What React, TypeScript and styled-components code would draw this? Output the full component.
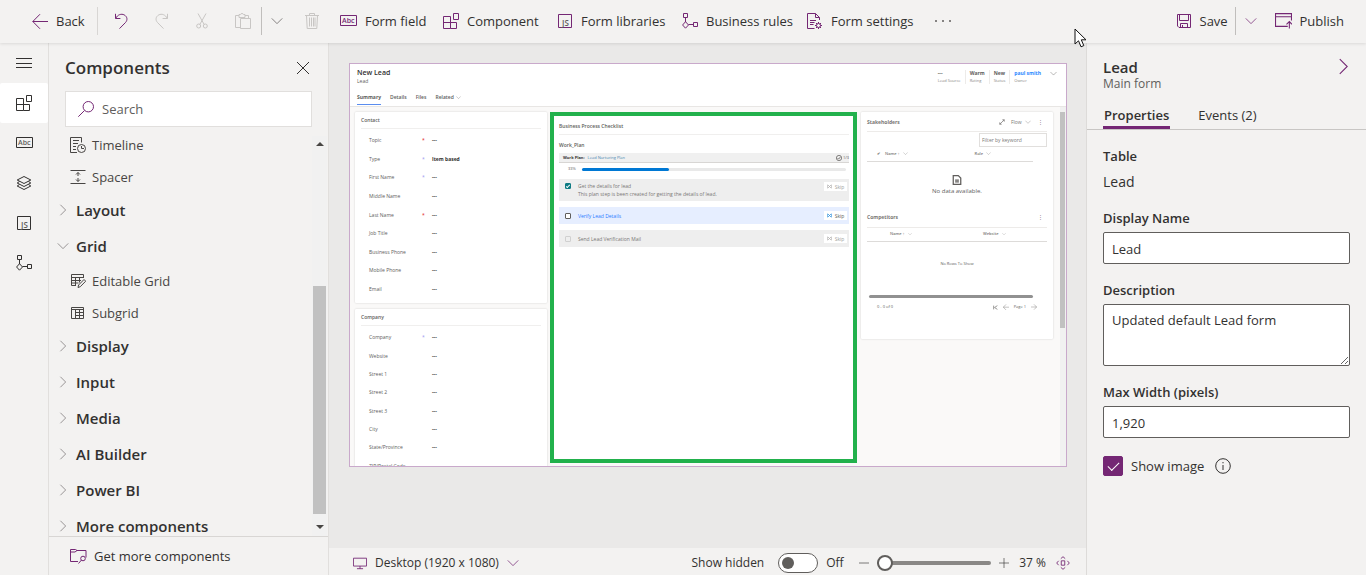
import React from "react";
import styled, { createGlobalStyle, css } from "styled-components";

const purple = "#742774";
const ink = "#323130";

const Global = createGlobalStyle`
  *, *::before, *::after { box-sizing: border-box; }
  body {
    margin: 0;
    font-family: "Segoe UI", "Open Sans", "Noto Sans", sans-serif;
    font-size: 13px;
    line-height: 20px;
    color: ${ink};
    background: #f3f2f1;
  }
  button, input, textarea { font: inherit; color: inherit; }
  button { border: 0; background: none; padding: 0; cursor: pointer; }
  a { color: inherit; text-decoration: none; }
  h1, h2, h3, p, ul, dl, dd, dt { margin: 0; padding: 0; font-weight: inherit; font-size: inherit; }
  ul { list-style: none; }
`;

/* ---------- icons ---------- */

const Svg = styled.svg<{ $c?: string }>`
  display: block;
  flex: none;
  fill: none;
  stroke: ${(p) => p.$c || "currentColor"};
`;

type IconProps = { c?: string; size?: number };
const Icon = ({ c, size = 16, children }: IconProps & { children: React.ReactNode }) => (
  <Svg $c={c} width={size} height={size} viewBox="0 0 16 16" aria-hidden="true">
    {children}
  </Svg>
);

const ArrowLeft = (p: IconProps) => <Icon {...p}><path d="M16 8.5H.8M8 1.2.8 8.5 8 15.8" /></Icon>;
const Undo = (p: IconProps) => <Icon {...p}><path d="M2.5.8V5.5H7.4M2.8 5.3C4.6 1.6 8.4.4 11.2 1.9c3 1.6 3.7 5 1.3 7.6L6.5 15.6" /></Icon>;
const Redo = (p: IconProps) => <Icon {...p}><path d="M13.5.8V5.5H8.6M13.2 5.3C11.4 1.6 7.6.4 4.8 1.9c-3 1.6-3.7 5-1.3 7.6L9.5 15.6" /></Icon>;
const Cut = (p: IconProps) => <Icon {...p}><path d="M4 .5 10.2 11.5M12 .5 5.8 11.5" /><circle cx="4.7" cy="13" r="2" /><circle cx="11.3" cy="13" r="2" /></Icon>;
const Paste = (p: IconProps) => <Icon {...p}><path d="M5.5 14.5H.5V2.5H4M10 2.5H13.5V5M4 4.5V1.5H5.5C5.5.2 8.5.2 8.5 1.5H10V4.5ZM5.5 5.5H15.5V15.5H5.5Z" /></Icon>;
const Trash = (p: IconProps) => <Icon {...p}><path d="M1 2.5H15M5.5 2.5V.5H10.5V2.5M2.5 2.5 3.2 15.5H12.8L13.5 2.5M5.5 4.5V13.5M7.5 4.5V13.5M9.5 4.5V13.5M11 4.5V13.5" /></Icon>;
const Component = (p: IconProps) => <Icon {...p}><path d="M.5 3.5H7.5V15.5H.5ZM.5 9.5H13.5V15.5H7.5M10.5.5H15.5V6.5H10.5Z" /></Icon>;
const Rules = (p: IconProps) => <Icon {...p}><path d="M1.5.5H5.5V4.5H1.5ZM3.5 4.5V9M3.5 8.7 6.5 12 3.5 15.2.6 12ZM6.5 11.5H11.5M11.5 9.5H15.5V13.5H11.5Z" /></Icon>;
const FormSettings = (p: IconProps) => <Icon {...p}><path d="M7.5 15.5H.5V.5H8.5L12.5 4.5V7M8.5.5V4.5H12.5M3 7.5H9M3 9.5H7.5M3 11.5H6.5" /><circle cx="11.5" cy="12.5" r="2" /><path d="M11.5 9V10.5M11.5 14.5V16M8 12.5H9.5M13.5 12.5H15M9 10 10.1 11.1M12.9 13.9 14 15M14 10 12.9 11.1M10.1 13.9 9 15" /></Icon>;
const Save = (p: IconProps) => <Icon {...p}><path d="M1.5 1.5H14.5V14.5H3L1.5 13ZM3.5 1.5V7.5H12.5V1.5M4.5 14.5V10.5H11.5V14.5M6.5 12V14.5" /></Icon>;
const Publish = (p: IconProps) => <Icon {...p}><path d="M12 13.5H.5V1.5H15.5V8M.5 4.5H15.5M13.5 15.5V9M10.8 11.6 13.5 9 16 11.6" /></Icon>;
const Menu = (p: IconProps) => <Icon {...p}><path d="M0 3.5H16M0 8.5H16M0 12.5H16" /></Icon>;
const Layers = (p: IconProps) => <Icon {...p}><path d="M8 1.5 14.8 5 8 8.5 1.2 5ZM3.5 6.5 1.2 8 8 11.5 14.8 8 12.5 6.5M3.5 9.5 1.2 11 8 14.5 14.8 11 12.5 9.5" /></Icon>;
const Close = (p: IconProps) => <Icon {...p}><path d="M2 2 14 14M14 2 2 14" /></Icon>;
const Search = (p: IconProps) => <Icon {...p}><circle cx="10.3" cy="5.7" r="5.2" /><path d="M6.5 9.5.3 15.7" /></Icon>;
const Timeline = (p: IconProps) => <Icon {...p}><path d="M7 15.5H.5V.5H11.5V5.5M3 3.5H9M3 6.5H8M3 9.5H6M3 12.5H6" /><circle cx="11.5" cy="11.5" r="4" /><path d="M11.5 9V11.5H14" /></Icon>;
const Spacer = (p: IconProps) => <Icon {...p}><path d="M.5 1.5H15.5M.5 14.5H15.5M8 3.5V7M8 9V12.5M6 5.5 8 3.5 10 5.5M6 10.5 8 12.5 10 10.5" /></Icon>;
const EditGrid = (p: IconProps) => <Icon {...p}><path d="M6 12.5H1.5V1.5H13.5V5M1.5 4.5H13.5M1.5 7.5H11M1.5 10H8.5M5.5 4.5V12.5M9.5 4.5V9.5M8 14.5 8.6 12 14 6.5 15.7 8.2 10.3 13.7Z" /></Icon>;
const Grid = (p: IconProps) => <Icon {...p}><path d="M1.5 2.5H13.5V13.5H1.5ZM1.5 4.5H13.5M5.5 4.5V13.5M9.5 4.5V13.5M5.5 7.5H13.5M5.5 10.5H13.5" /></Icon>;
const Chevron = ({ c, size = 12, dir = "down" }: IconProps & { dir?: "down" | "right" }) => (
  <Icon c={c} size={size}>{dir === "down" ? <path d="M1 4.5 8 11.5 15 4.5" /> : <path d="M4.5 1 11.5 8 4.5 15" />}</Icon>
);
const GetMore = () => (
  <Svg $c={purple} width="18" height="16" viewBox="0 0 18 16" aria-hidden="true">
    <path d="M9 13.5H1.5V1.5H6.5L8 2.5H17V9.5M1.5 4H6L8 2.5M9.5 15.5 12.5 12" /><circle cx="14" cy="10.5" r="2.3" />
  </Svg>
);
const Monitor = () => (
  <Icon c={purple} size={14}><path d="M.5 2.5H15.5V11.5H.5ZM8 11.5V14.5M4.5 14.5H11.5" /></Icon>
);
const Fit = () => (
  <Icon c={purple} size={14}><path d="M6 5.5H10V10.5H6ZM5.5 3 8 .8 10.5 3M5.5 13 8 15.2 10.5 13M3 5.5.8 8 3 10.5M13 5.5 15.2 8 13 10.5" /></Icon>
);
const Info = () => <Icon><circle cx="8" cy="8" r="7.3" /><path d="M8 7V12M8 4V5.3" /></Icon>;
const Pointer = styled.svg`
  position: absolute;
  right: 279px;
  top: 28px;
  z-index: 5;
`;

const IconText = styled.text`
  stroke: none;
  font-family: "Open Sans", sans-serif;
`;
const Abc = ({ c, t }: { c: string; t: string }) => (
  <Svg $c={c} width="17" height="16" viewBox="0 0 17 16" aria-hidden="true">
    <path d="M.5 2.5H16.5V12.5H.5Z" />
    <IconText x="2" y="10" fontSize="7" fontWeight="600" fill={t}>Abc</IconText>
  </Svg>
);
const Js = ({ c, t }: { c: string; t: string }) => (
  <Svg $c={c} width="16" height="16" viewBox="0 0 16 16" aria-hidden="true">
    <path d="M1.5 1.5H14.5V14.5H1.5Z" />
    <IconText x="5" y="13" fontSize="8" fontWeight="600" fill={t}>JS</IconText>
  </Svg>
);

/* ---------- shell ---------- */

const Shell = styled.div`
  display: grid;
  grid-template: 43px minmax(0, 1fr) / 49px 280px minmax(0, 1fr) 280px;
  height: 100vh;
`;

const TopBar = styled.header`
  grid-column: 1 / -1;
  position: relative;
  z-index: 2;
  display: flex;
  align-items: center;
  padding: 0 14px 2px 24px;
  box-shadow: 0 1px 3px rgba(0, 0, 0, 0.1);
  background: #f3f2f1;
`;
const Command = styled.button<{ $w?: number }>`
  display: flex;
  align-items: center;
  gap: 8px;
  height: 40px;
  padding: 0 8px;
  white-space: nowrap;
  ${(p) => p.$w && css`width: ${p.$w}px;`}
`;
const IconButton = styled.button<{ $w?: number }>`
  display: grid;
  place-items: center;
  width: ${(p) => p.$w || 40}px;
  height: 40px;
`;
const Divider = styled.span<{ $strong?: boolean }>`
  width: 1px;
  height: 28px;
  background: ${(p) => (p.$strong ? "#c0bebc" : "#d8d6d4")};
`;
const Push = styled.span`flex: 1;`;
const Dots = styled.span`
  display: flex;
  gap: 5px;
  i { width: 2px; height: 2px; border-radius: 1px; background: #605e5c; }
`;

const Rail = styled.nav`
  border-right: 1px solid #e1dfdd;
`;
const RailButton = styled.button<{ $on?: boolean }>`
  display: grid;
  place-items: center;
  width: 48px;
  height: 40px;
  border-radius: 2px;
  background: ${(p) => (p.$on ? "#fff" : "transparent")};
`;

/* ---------- component panel ---------- */

const Panel = styled.aside`
  display: flex;
  flex-direction: column;
  min-height: 0;
  border-right: 1px solid #e1dfdd;
`;
const PanelHead = styled.div`
  display: flex;
  align-items: center;
  justify-content: space-between;
  height: 48px;
  padding: 1px 17px 0 16px;
`;
const PanelTitle = styled.h2`
  && { font-size: 17px; font-weight: 600; }
`;
const SearchBox = styled.label`
  display: flex;
  align-items: center;
  gap: 8px;
  height: 36px;
  margin: 0 16px 2px;
  padding: 0 12px;
  border: 1px solid #e1dfdd;
  background: #fff;
  input { width: 100%; border: 0; padding: 0; outline: 0; background: none; }
  input::placeholder { color: #605e5c; opacity: 1; }
`;
const ListArea = styled.div`
  display: flex;
  flex: 1;
  min-height: 0;
  padding-right: 1px;
  border-bottom: 1px solid #d8d6d4;
`;
const List = styled.ul`
  flex: 1;
  overflow: hidden;
`;
const Leaf = styled.button`
  display: flex;
  align-items: center;
  gap: 6px;
  width: 100%;
  height: 32px;
  padding-left: 21px;
  color: #484644;
`;
const Group = styled.button`
  display: flex;
  align-items: center;
  gap: 7px;
  width: 100%;
  height: 36px;
  padding: 0 0 2px 8px;
  font-size: 15px;
  font-weight: 600;
  svg { stroke: #797775; }
`;
const Track = styled.div`
  display: flex;
  flex-direction: column;
  align-items: center;
  justify-content: space-between;
  width: 15px;
  margin-top: 7px;
  padding: 6px 0 7px;
  background: #f1f1f1;
`;
const Thumb = styled.span`
  width: 13px;
  flex: 0 0 59%;
  margin-top: auto;
  margin-bottom: 11px;
  background: #c1c1c1;
`;
const Caret = styled.span<{ $up?: boolean }>`
  border: 4px solid transparent;
  border-${(p) => (p.$up ? "bottom" : "top")}-color: #484644;
  border-${(p) => (p.$up ? "top" : "bottom")}-width: 0;
`;
const GetMoreLink = styled.a`
  display: flex;
  align-items: center;
  gap: 7px;
  height: 38px;
  padding-left: 20px;
`;

/* ---------- canvas ---------- */

const Canvas = styled.main`
  display: flex;
  flex-direction: column;
  background: #eae9e8;
  min-width: 0;
`;
const Stage = styled.div`
  flex: 1;
  min-height: 0;
  padding: 20px 19px 0 20px;
`;
const Form = styled.div`
  display: flex;
  flex-direction: column;
  aspect-ratio: 718 / 404;
  overflow: hidden;
  border: 1px solid #c9a9cb;
  background: #faf9f8;
  font-size: 5px;
  line-height: 8px;
  color: #605e5c;
`;
const FormHead = styled.div`
  display: flex;
  justify-content: space-between;
  height: 43px;
  padding: 5px 9px 0 7px;
  border-bottom: 1px solid #e8e6e4;
  background: #fff;
`;
const FormTitle = styled.h1`
  && { font-size: 7px; font-weight: 600; }
  color: ${ink};
`;
const FormTabs = styled.div`
  display: flex;
  gap: 9px;
  margin-top: 6px;
`;
const FormTab = styled.button<{ $on?: boolean }>`
  display: flex;
  align-items: center;
  gap: 2px;
  height: 14px;
  padding-bottom: 1px;
  border-bottom: 1px solid ${(p) => (p.$on ? "#5b8def" : "transparent")};
  font-weight: ${(p) => (p.$on ? 700 : 600)};
`;
const Facts = styled.dl`
  display: flex;
  align-items: start;
  padding-top: 1px;
`;
const Fact = styled.div`
  display: flex;
  flex-direction: column-reverse;
  padding: 0 4px;
  border-right: 1px solid #edebe9;
  line-height: 7px;
  font-size: 4px;
  dt { color: #8a8886; }
  dd { font-size: 5px; font-weight: 700; }
  a { color: #2b88ff; }
  &:nth-last-of-type(1) { border: 0; padding-right: 9px; }
`;
const Body = styled.div`
  display: flex;
  flex: 1;
  min-height: 0;
`;
const Columns = styled.div`
  display: grid;
  grid-template-columns: 192fr 307fr 193fr;
  gap: 3px;
  flex: 1;
  padding: 5px 7px 0 5px;
  min-height: 0;
`;
const Column = styled.div`
  display: flex;
  flex-direction: column;
  gap: 6px;
  min-height: 0;
`;
const Card = styled.section`
  flex: none;
  padding: 0 6px 3px;
  border-radius: 1px;
  background: #fff;
  box-shadow: 0 0 2px rgba(0, 0, 0, 0.18);
`;
const RightCard = styled(Card)`
  height: 227px;
  margin-left: 1px;
`;
const CardTitle = styled.h3`
  height: 17px;
  padding-top: 4px;
  border-bottom: 1px solid #f0efee;
  && { font-weight: 600; }
`;
const Fields = styled.dl<{ $h: number }>`
  display: flex;
  flex-direction: column;
  height: ${(p) => p.$h}px;
  padding: 2px 8px;
`;
const Field = styled.div`
  display: grid;
  grid-template-columns: 53px 10px 1fr;
  align-items: center;
  flex: 1;
  dd { color: ${ink}; font-weight: 700; }
`;
const Mark = styled.span<{ $red?: boolean }>`
  color: ${(p) => (p.$red ? "#e02020" : "#9a9af0")};
`;

const Highlight = styled.section`
  height: 351px;
  padding: 2px 4px 0 5px;
  border: 4px solid #22b14c;
  background: #fff;
`;
const PlanLabel = styled.p`
  margin: 6px 0 4px;
  font-weight: 600;
`;
const PlanHead = styled.div`
  display: flex;
  align-items: center;
  gap: 3px;
  height: 10px;
  padding: 0 0 0 4px;
  border-bottom: 1px solid #d8d6d4;
  background: #f0f0f0;
  font-size: 4px;
  b { color: ${ink}; }
  a { color: #4a86b0; }
  span:last-child { display: flex; align-items: center; gap: 1px; margin-left: auto; }
`;
const Progress = styled.div`
  display: flex;
  align-items: center;
  gap: 6px;
  height: 12px;
  margin-bottom: 4px;
  padding: 0 3px 0 9px;
  font-size: 4px;
`;
const Bar = styled.div`
  flex: 1;
  height: 3px;
  border-radius: 2px;
  background: #e9e9e9;
  div { width: 33%; height: 3px; border-radius: 2px; background: #0078d4; }
`;
const Step = styled.div<{ $active?: boolean; $tall?: boolean }>`
  display: flex;
  align-items: ${(p) => (p.$tall ? "start" : "center")};
  height: ${(p) => (p.$tall ? 22 : 17)}px;
  margin-bottom: 6px;
  padding: ${(p) => (p.$tall ? "3px 2px 0 6px" : "0 2px 0 6px")};
  background: ${(p) => (p.$active ? "#e6eeff" : "#eeeeee")};
  label { flex: 1; padding-left: 7px; color: ${(p) => (p.$active ? "#2b7cff" : "#797775")}; }
`;
const Tick = styled.input<{ $muted?: boolean }>`
  appearance: none;
  display: grid;
  place-items: center;
  width: 6px;
  height: 6px;
  margin: 1px 0 0;
  border: 1px solid ${(p) => (p.$muted ? "#d0d0d0" : "#605e5c")};
  border-radius: 1px;
  background: ${(p) => (p.$muted ? "#eee" : "#fff")};
  &:checked { background: #0f7b83; border-color: #0f7b83; }
  &:checked::after {
    content: "";
    width: 4px;
    height: 2px;
    border: solid #fff;
    border-width: 0 0 1px 1px;
    transform: rotate(-45deg);
  }
`;
const Skip = styled.button<{ $active?: boolean }>`
  display: flex;
  align-items: center;
  justify-content: center;
  gap: 3px;
  width: 23px;
  height: 9px;
  background: #fff;
  color: ${(p) => (p.$active ? "#605e5c" : "#a19f9d")};
  svg { stroke: ${(p) => (p.$active ? "#0078d4" : "#a19f9d")}; }
`;

const RightHead = styled.div`
  display: flex;
  align-items: center;
  gap: 4px;
  height: 20px;
  padding-right: 4px;
  border-bottom: 1px solid #edebe9;
  color: #797775;
  h3 { flex: 1; font-weight: 700; }
  button { display: flex; align-items: center; gap: 3px; padding-left: 2px; }
`;
const Filter = styled.input`
  display: block;
  width: 68px;
  height: 14px;
  margin: 1px 0 0 auto;
  padding: 0 2px;
  border: 1px solid #e1dfdd;
  background: #fff;
  &::placeholder { color: #797775; opacity: 1; }
`;
const MiniTable = styled.table<{ $inset?: boolean }>`
  width: ${(p) => (p.$inset ? "92%" : "100%")};
  border-collapse: collapse;
  font-size: 4px;
  line-height: 6px;
  color: #797775;
  th { height: 14px; padding: 0; text-align: left; font-weight: 600; border-bottom: 1px solid #dddbd9; }
  th:first-child { width: ${(p) => (p.$inset ? 18 : 23)}px; padding-left: ${(p) => (p.$inset ? 10 : 0)}px; }
  th:last-child { width: ${(p) => (p.$inset ? 58 : 64)}px; }
  th span { display: inline-flex; align-items: center; gap: 3px; }
`;
const Empty = styled.div<{ $h: number; $big?: boolean }>`
  display: flex;
  flex-direction: column;
  align-items: center;
  justify-content: center;
  gap: 2px;
  height: ${(p) => p.$h}px;
  font-size: ${(p) => (p.$big ? 6 : 4)}px;
`;
const HScroll = styled.div`
  width: 164px;
  height: 3px;
  margin: 10px 0 0 2px;
  border-radius: 2px;
  background: #919191;
`;
const Pager = styled.div`
  display: flex;
  align-items: center;
  gap: 5px;
  margin-top: 5px;
  padding: 0 10px;
  font-size: 4px;
  span:first-child { flex: 1; }
`;
const BodyScroll = styled.div`
  width: 6px;
  padding-top: 5px;
  background: #f1f1f1;
  div { height: 61%; width: 5px; background: #c1c1c1; }
`;

const Status = styled.footer`
  display: flex;
  align-items: center;
  height: 27px;
  padding: 2px 16px 0 24px;
  background: #f3f2f1;
  font-size: 12px;
`;
const StatusButton = styled.button`
  display: flex;
  align-items: center;
  gap: 8px;
  margin-right: auto;
  padding-top: 1px;
`;
const SwitchLabel = styled.label`
  display: flex;
  align-items: center;
  gap: 14px;
  input {
    appearance: none;
    display: flex;
    align-items: center;
    width: 40px;
    height: 20px;
    margin: 0;
    padding: 0 3px;
    border: 1px solid #605e5c;
    border-radius: 10px;
    background: #fff;
  }
  input::after { content: ""; width: 12px; height: 12px; border-radius: 6px; background: #605e5c; }
`;
const Off = styled.span`width: 41px; padding-left: 8px;`;
const Zoom = styled.input`
  appearance: none;
  width: 114px;
  height: 16px;
  margin: 0 8px;
  background: none;
  &::-webkit-slider-runnable-track { height: 4px; border-radius: 2px; background: #8a8886; }
  &::-webkit-slider-thumb {
    appearance: none;
    width: 16px;
    height: 16px;
    margin-top: -6px;
    border: 2px solid #605e5c;
    border-radius: 8px;
    background: #fff;
  }
`;
const Percent = styled.output`margin: 0 10px;`;

/* ---------- properties ---------- */

const Props = styled.aside`
  border-left: 1px solid #dddbd9;
`;
const PropsHead = styled.div`
  display: flex;
  justify-content: space-between;
  height: 58px;
  padding: 14px 14px 0 16px;
  h2 { font-size: 15px; font-weight: 600; line-height: 20px; }
  p { font-size: 12px; line-height: 14px; color: #605e5c; }
  button { height: 18px; }
`;
const Tabs = styled.div`
  display: flex;
  gap: 27px;
  height: 29px;
  padding: 0 16px;
  border-bottom: 1px solid #c8c6c4;
`;
const Tab = styled.button<{ $on?: boolean }>`
  height: 28px;
  padding: 2px 1px 0;
  border-bottom: 3px solid ${(p) => (p.$on ? purple : "transparent")};
  font-weight: ${(p) => (p.$on ? 600 : 400)};
`;
const PropsForm = styled.div`
  display: flex;
  flex-direction: column;
  padding: 16px 16px 0;
  h3 { font-weight: 600; }
`;
const Caption = styled.label`
  font-weight: 600;
  margin-bottom: 4px;
`;
const Value = styled.p`
  height: 26px;
  margin-bottom: 12px;
  line-height: 23px;
  && { font-size: 14px; }
`;
const box = css`
  width: 100%;
  margin: 0 0 16px;
  border: 1px solid #605e5c;
  border-radius: 2px;
  background: #fff;
`;
const TextInput = styled.input`
  ${box}
  height: 32px;
  padding: 2px 8px 0;
`;
const TextArea = styled.textarea`
  ${box}
  height: 62px;
  padding: 5px 8px;
  resize: vertical;
`;
const CheckRow = styled.div`
  display: flex;
  align-items: center;
  gap: 8px;
  margin-top: 2px;
  label { padding-right: 3px; }
`;
const Check = styled.input`
  appearance: none;
  display: grid;
  place-items: center;
  width: 20px;
  height: 20px;
  margin: 0;
  border: 1px solid ${purple};
  border-radius: 2px;
  background: #fff;
  &:checked { background: ${purple}; }
  &:checked::after {
    content: "";
    width: 11px;
    height: 6px;
    margin-bottom: 3px;
    border: solid #fff;
    border-width: 0 0 1px 1px;
    transform: rotate(-45deg);
  }
`;

/* ---------- data ---------- */

type Row = [name: string, mark?: string, value?: string];
const contact: Row[] = [
  ["Topic", "red"], ["Type", "blue", "Item based"], ["First Name", "blue"], ["Middle Name"],
  ["Last Name", "red"], ["Job Title"], ["Business Phone"], ["Mobile Phone"], ["Email"],
];
const company: Row[] = [
  ["Company", "blue"], ["Website"], ["Street 1"], ["Street 2"], ["Street 3"], ["City"],
  ["State/Province"], ["ZIP/Postal Code", "", " "],
];

const FieldRows = ({ rows, height }: { rows: Row[]; height: number }) => (
  <Fields $h={height}>
    {rows.map(([name, mark, value]) => (
      <Field key={name}>
        <dt>{name}</dt>
        <Mark $red={mark === "red"}>{mark ? "*" : ""}</Mark>
        <dd>{value || "---"}</dd>
      </Field>
    ))}
  </Fields>
);

const SkipButton = ({ active }: { active?: boolean }) => (
  <Skip $active={active}>
    <Icon size={5}><path strokeWidth="2" d="M1 2V14M15 2V14M3 3 8 8 3 13M13 3 8 8 13 13" /></Icon>
    Skip
  </Skip>
);

const FormPreview = () => (
  <Form>
    <FormHead>
      <div>
        <FormTitle>New Lead</FormTitle>
        <p>Lead</p>
        <FormTabs>
          <FormTab $on>Summary</FormTab>
          <FormTab>Details</FormTab>
          <FormTab>Files</FormTab>
          <FormTab>Related <Chevron size={5} /></FormTab>
        </FormTabs>
      </div>
      <Facts>
        <Fact><dt>Lead Source</dt><dd>---</dd></Fact>
        <Fact><dt>Rating</dt><dd>Warm</dd></Fact>
        <Fact><dt>Status</dt><dd>New</dd></Fact>
        <Fact><dt>Owner</dt><dd><a href="#owner">paul smith</a></dd></Fact>
        <Chevron size={7} />
      </Facts>
    </FormHead>
    <Body>
      <Columns>
        <Column>
          <Card>
            <CardTitle>Contact</CardTitle>
            <FieldRows rows={contact} height={171} />
          </Card>
          <Card>
            <CardTitle>Company</CardTitle>
            <FieldRows rows={company} height={151} />
          </Card>
        </Column>
        <Highlight>
          <CardTitle>Business Process Checklist</CardTitle>
          <PlanLabel>Work_Plan</PlanLabel>
          <PlanHead>
            <b>Work Plan:</b>
            <a href="#plan">Lead Nurturing Plan</a>
            <span><Icon size={6}><circle cx="8" cy="8" r="7" strokeWidth="2" /><path strokeWidth="2" d="M4 8 7 11 12 5" /></Icon>1/3</span>
          </PlanHead>
          <Progress>33%<Bar><div /></Bar></Progress>
          <Step $tall>
            <Tick type="checkbox" id="s1" defaultChecked />
            <label htmlFor="s1">Get the details for lead<br />This plan step is been created for getting the details of lead.</label>
            <SkipButton />
          </Step>
          <Step $active>
            <Tick type="checkbox" id="s2" />
            <label htmlFor="s2">Verify Lead Details</label>
            <SkipButton active />
          </Step>
          <Step>
            <Tick type="checkbox" id="s3" $muted />
            <label htmlFor="s3">Send Lead Verification Mail</label>
            <SkipButton />
          </Step>
        </Highlight>
        <Column>
          <RightCard>
            <RightHead>
              <h3>Stakeholders</h3>
              <Icon size={6}><path strokeWidth="2" d="M2 14 14 2M9 2H14V7M2 9V14H7" /></Icon>
              <button>Flow <Chevron size={6} /></button>
              <button aria-label="More">&nbsp;⋮</button>
            </RightHead>
            <Filter aria-label="Filter" placeholder="Filter by keyword" />
            <MiniTable $inset>
              <thead><tr><th>✔</th><th><span>Name ↑ <Chevron size={5} /></span></th><th><span>Role <Chevron size={5} /></span></th></tr></thead>
            </MiniTable>
            <Empty $h={46} $big>
              <Icon size={10}><path strokeWidth="2" d="M2 1H10L14 5V15H2ZM5 8H11M5 11H11" /></Icon>
              No data available.
            </Empty>
            <RightHead>
              <h3>Competitors</h3>
              <button aria-label="More">⋮</button>
            </RightHead>
            <MiniTable>
              <thead><tr><th aria-label="Select" /><th><span>Name ↑ <Chevron size={4} /></span></th><th><span>Website <Chevron size={4} /></span></th></tr></thead>
            </MiniTable>
            <Empty $h={43}>No Rows To Show</Empty>
            <HScroll />
            <Pager>
              <span>0 - 0 of 0</span>
              <Icon size={5}><path strokeWidth="2" d="M2 2V14M14 2 5 8 14 14" /></Icon>
              <ArrowLeft size={6} />
              Page 1
              <Icon size={6}><path d="M0 8H15M8 1 15 8 8 15" /></Icon>
            </Pager>
          </RightCard>
        </Column>
      </Columns>
      <BodyScroll><div /></BodyScroll>
    </Body>
  </Form>
);

export default function App() {
  const muted = "#c8c6c4";
  return (
    <>
      <Global />
      <Shell>
        <TopBar>
          <Command $w={73}><ArrowLeft c={purple} />Back</Command>
          <Divider />
          <IconButton $w={46} aria-label="Undo"><Undo c={purple} /></IconButton>
          <IconButton $w={36} aria-label="Redo"><Redo c={muted} /></IconButton>
          <IconButton $w={44} aria-label="Cut"><Cut c={muted} /></IconButton>
          <IconButton $w={37} aria-label="Paste"><Paste c={muted} /></IconButton>
          <Divider $strong />
          <IconButton $w={30} aria-label="Paste options"><Chevron c="#605e5c" /></IconButton>
          <IconButton aria-label="Delete"><Trash c={muted} /></IconButton>
          <Command $w={103}><Abc c={purple} t={purple} />Form field</Command>
          <Command $w={114}><Component c={purple} />Component</Command>
          <Command $w={125}><Js c={purple} t="#605e5c" />Form libraries</Command>
          <Command $w={125}><Rules c={purple} />Business rules</Command>
          <Command $w={124}><FormSettings c={purple} />Form settings</Command>
          <IconButton aria-label="More commands"><Dots><i /><i /><i /></Dots></IconButton>
          <Push />
          <Command $w={67}><Save c={purple} />Save</Command>
          <Divider $strong />
          <IconButton $w={31} aria-label="Save options"><Chevron c={purple} /></IconButton>
          <Command><Publish c={purple} size={17} />Publish</Command>
          <Pointer width="13" height="20" viewBox="0 0 13 20" aria-hidden="true">
            <path d="M1 1V16L4.5 12.8 7 18.8 9.8 17.6 7.3 11.8H12Z" fill="#fff" stroke="#111" />
          </Pointer>
        </TopBar>

        <Rail>
          <RailButton aria-label="Menu"><Menu /></RailButton>
          <RailButton aria-label="Components" $on><Component /></RailButton>
          <RailButton aria-label="Form fields"><Abc c={ink} t="#605e5c" /></RailButton>
          <RailButton aria-label="Layers"><Layers /></RailButton>
          <RailButton aria-label="Libraries"><Js c={ink} t="#605e5c" /></RailButton>
          <RailButton aria-label="Rules"><Rules /></RailButton>
        </Rail>

        <Panel>
          <PanelHead>
            <PanelTitle>Components</PanelTitle>
            <button aria-label="Close"><Close /></button>
          </PanelHead>
          <SearchBox><Search c={purple} /><input placeholder="Search" aria-label="Search" /></SearchBox>
          <ListArea>
            <List>
              <li><Leaf><Timeline />Timeline</Leaf></li>
              <li><Leaf><Spacer />Spacer</Leaf></li>
              <li><Group><Chevron dir="right" />Layout</Group></li>
              <li><Group><Chevron />Grid</Group></li>
              <li><Leaf><EditGrid />Editable Grid</Leaf></li>
              <li><Leaf><Grid />Subgrid</Leaf></li>
              {["Display", "Input", "Media", "AI Builder", "Power BI", "More components"].map((g) => (
                <li key={g}><Group><Chevron dir="right" />{g}</Group></li>
              ))}
            </List>
            <Track><Caret $up /><Thumb /><Caret /></Track>
          </ListArea>
          <GetMoreLink href="#more"><GetMore />Get more components</GetMoreLink>
        </Panel>

        <Canvas>
          <Stage><FormPreview /></Stage>
          <Status>
            <StatusButton><Monitor />Desktop (1920 x 1080)<Chevron c={purple} /></StatusButton>
            <SwitchLabel>Show hidden<input type="checkbox" role="switch" /></SwitchLabel>
            <Off>Off</Off>
            <button aria-label="Zoom out"><Icon size={10}><path d="M0 8H16" /></Icon></button>
            <Zoom type="range" min="37" max="200" defaultValue="37" aria-label="Zoom" />
            <button aria-label="Zoom in"><Icon size={10}><path d="M0 8H16M8 0V16" /></Icon></button>
            <Percent>37 %</Percent>
            <button aria-label="Fit to screen"><Fit /></button>
          </Status>
        </Canvas>

        <Props>
          <PropsHead>
            <div><h2>Lead</h2><p>Main form</p></div>
            <button aria-label="Collapse"><Chevron dir="right" size={17} c={purple} /></button>
          </PropsHead>
          <Tabs><Tab $on>Properties</Tab><Tab>Events (2)</Tab></Tabs>
          <PropsForm>
            <Caption as="h3">Table</Caption>
            <Value>Lead</Value>
            <Caption htmlFor="name">Display Name</Caption>
            <TextInput id="name" defaultValue="Lead" />
            <Caption htmlFor="desc">Description</Caption>
            <TextArea id="desc" defaultValue="Updated default Lead form" />
            <Caption htmlFor="width">Max Width (pixels)</Caption>
            <TextInput id="width" defaultValue="1,920" />
            <CheckRow>
              <Check type="checkbox" id="image" defaultChecked />
              <label htmlFor="image">Show image</label>
              <Info />
            </CheckRow>
          </PropsForm>
        </Props>
      </Shell>
    </>
  );
}
